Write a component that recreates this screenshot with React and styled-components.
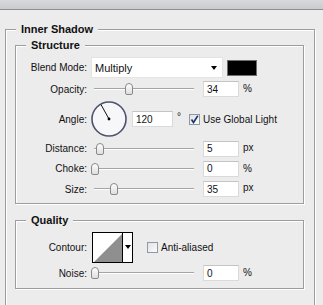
import styled, { createGlobalStyle } from 'styled-components'

const Global = createGlobalStyle`
  html, body { margin: 0; padding: 0; background: #ececec; overflow: hidden; }
  body {
    font-family: "Liberation Sans", Arial, sans-serif;
    font-size: 10px;
    color: #111;
  }
`

const TitleBar = styled.div`
  height: 9px;
  background: linear-gradient(#d7d9dc, #c9cbcf);
  border-bottom: 1px solid #8c8f93;
`

const Panel = styled.div`
  padding: 13px 8px 0 5px;
`

const Group = styled.fieldset`
  margin: ${p => p.$mt || 0}px 0 0 0;
  padding: ${p => p.$pad};
  border: 1px solid #9d9d9d;
  box-shadow: inset 1px 1px 0 #fff, 1px 1px 0 #fff;
  min-width: 0;
`

const Legend = styled.legend`
  margin-left: ${p => p.$ml}px;
  padding: 0 5px;
  font-weight: bold;
  font-size: 11px;
  line-height: 13px;
  background: #ececec;
`

const Row = styled.div`
  display: grid;
  grid-template-columns: 71px 1fr;
  column-gap: 4px;
  align-items: center;
  height: ${p => p.$h}px;
  margin-top: ${p => p.$mt || 0}px;
`

const Label = styled.span`
  text-align: right;
  white-space: nowrap;
`

const Controls = styled.div`
  display: flex;
  align-items: center;
`

const Select = styled.div`
  width: 132px;
  height: 21px;
  box-sizing: border-box;
  background: #fff;
  border: 1px solid #e4e4e4;
  display: flex;
  align-items: center;
  justify-content: space-between;
  padding: 0 5px 0 3px;
  font-size: 11px;
`

const Arrow = styled.span`
  width: 0;
  height: 0;
  border-left: 3.5px solid transparent;
  border-right: 3.5px solid transparent;
  border-top: 4px solid #000;
`

const Swatch = styled.div`
  width: 30px;
  height: 16px;
  box-sizing: border-box;
  margin-left: 4px;
  background: #000;
  border: 1px solid #6e6e6e;
`

const SliderBox = styled.div`
  position: relative;
  width: 103px;
  height: 14px;
  flex: none;
`

const Track = styled.div`
  position: absolute;
  left: 3px;
  right: 0;
  top: 6px;
  height: 1px;
  background: #a4a4a4;
  border-bottom: 1px solid #fff;
`

const Thumb = styled.div`
  position: absolute;
  top: 1px;
  width: 8px;
  height: 12px;
  box-sizing: border-box;
  border: 1px solid #8a8a8a;
  border-radius: 4px 4px 2px 2px;
  background: linear-gradient(#fdfdfd, #dedede);
`

const Field = styled.div`
  width: ${p => p.$w || 36}px;
  height: 16px;
  box-sizing: border-box;
  margin-left: ${p => p.$ml ?? 9}px;
  background: #fff;
  border: 1px solid #dadada;
  border-top-color: #c4c4c4;
  padding-left: 3px;
  display: flex;
  align-items: center;
  font-size: 10px;
`

const Unit = styled.span`
  margin-left: 4px;
  margin-top: ${p => p.$up || 0}px;
  align-self: ${p => (p.$top ? 'flex-start' : 'center')};
`

const Check = styled.span`
  width: 11px;
  height: 11px;
  box-sizing: border-box;
  margin-left: ${p => p.$ml}px;
  border: 1px solid #8e99a6;
  background: linear-gradient(135deg, #dfe3e8, #fbfbfb);
  display: flex;
  align-items: center;
  justify-content: center;
  flex: none;
`

const CheckText = styled.span`
  margin-left: 3px;
  white-space: nowrap;
`

const Contour = styled.div`
  display: flex;
  margin-left: 1px;
  width: 41px;
  height: 31px;
  box-sizing: border-box;
  border: 1px solid #000;
  background: #fff;
`

const ContourDrop = styled.div`
  flex: 1;
  border-left: 1px solid #000;
  display: flex;
  justify-content: center;
  padding-top: 12px;
`

function Slider({ pos }) {
  return (
    <SliderBox>
      <Track />
      <Thumb style={{ left: pos }} />
    </SliderBox>
  )
}

function SliderRow({ label, pos, value, unit, h, mt }) {
  return (
    <Row $h={h} $mt={mt}>
      <Label>{label}</Label>
      <Controls>
        <Slider pos={pos} />
        <Field>{value}</Field>
        <Unit $up={unit === 'px' ? -3 : -1}>{unit}</Unit>
      </Controls>
    </Row>
  )
}

export default function App() {
  return (
    <>
      <Global />
      <TitleBar />
      <Panel>
        <Group $pad="3px 10px 20px 9px">
          <Legend $ml={1}>Inner Shadow</Legend>

          <Group $pad="5px 0 4px 0">
            <Legend $ml={10}>Structure</Legend>
            <Row $h={21}>
              <Label>Blend Mode:</Label>
              <Controls>
                <Select>
                  <span>Multiply</span>
                  <Arrow />
                </Select>
                <Swatch />
              </Controls>
            </Row>
            <SliderRow label="Opacity:" pos={34} value="34" unit="%" h={20} mt={1} />
            <Row $h={40}>
              <Label>Angle:</Label>
              <Controls>
                <svg width="37" height="40" viewBox="0 0 37 40">
                  <circle cx="18" cy="20" r="17" fill="#f7f7f9" stroke="#4d536f" strokeWidth="1.6" />
                  <line x1="18" y1="20" x2="10" y2="5.6" stroke="#111" strokeWidth="1" />
                  <circle cx="18" cy="20" r="1.4" fill="#000" />
                </svg>
                <Field $w={41} $ml={4}>120</Field>
                <Unit $up={-6}>°</Unit>
                <Check $ml={8}>
                  <svg width="9" height="9" viewBox="0 0 9 9">
                    <path d="M1.5 4.5 L3.5 7.5 L7.8 0.8" fill="none" stroke="#1f3566" strokeWidth="1.6" />
                  </svg>
                </Check>
                <CheckText>Use Global Light</CheckText>
              </Controls>
            </Row>
            <SliderRow label="Distance:" pos={5} value="5" unit="px" h={19} />
            <SliderRow label="Choke:" pos={0} value="0" unit="%" h={21} />
            <SliderRow label="Size:" pos={19} value="35" unit="px" h={20} />
          </Group>

          <Group $mt={10} $pad="4px 0 6px 0">
            <Legend $ml={10}>Quality</Legend>
            <Row $h={32}>
              <Label>Contour:</Label>
              <Controls>
                <Contour>
                  <svg width="29" height="29" viewBox="0 0 29 29">
                    <polygon points="1,29 29,1 29,29" fill="#8f8f8f" />
                  </svg>
                  <ContourDrop>
                    <Arrow />
                  </ContourDrop>
                </Contour>
                <Check $ml={14} />
                <CheckText>Anti-aliased</CheckText>
              </Controls>
            </Row>
            <SliderRow label="Noise:" pos={0} value="0" unit="%" h={18} mt={1} />
          </Group>
        </Group>
      </Panel>
    </>
  )
}
